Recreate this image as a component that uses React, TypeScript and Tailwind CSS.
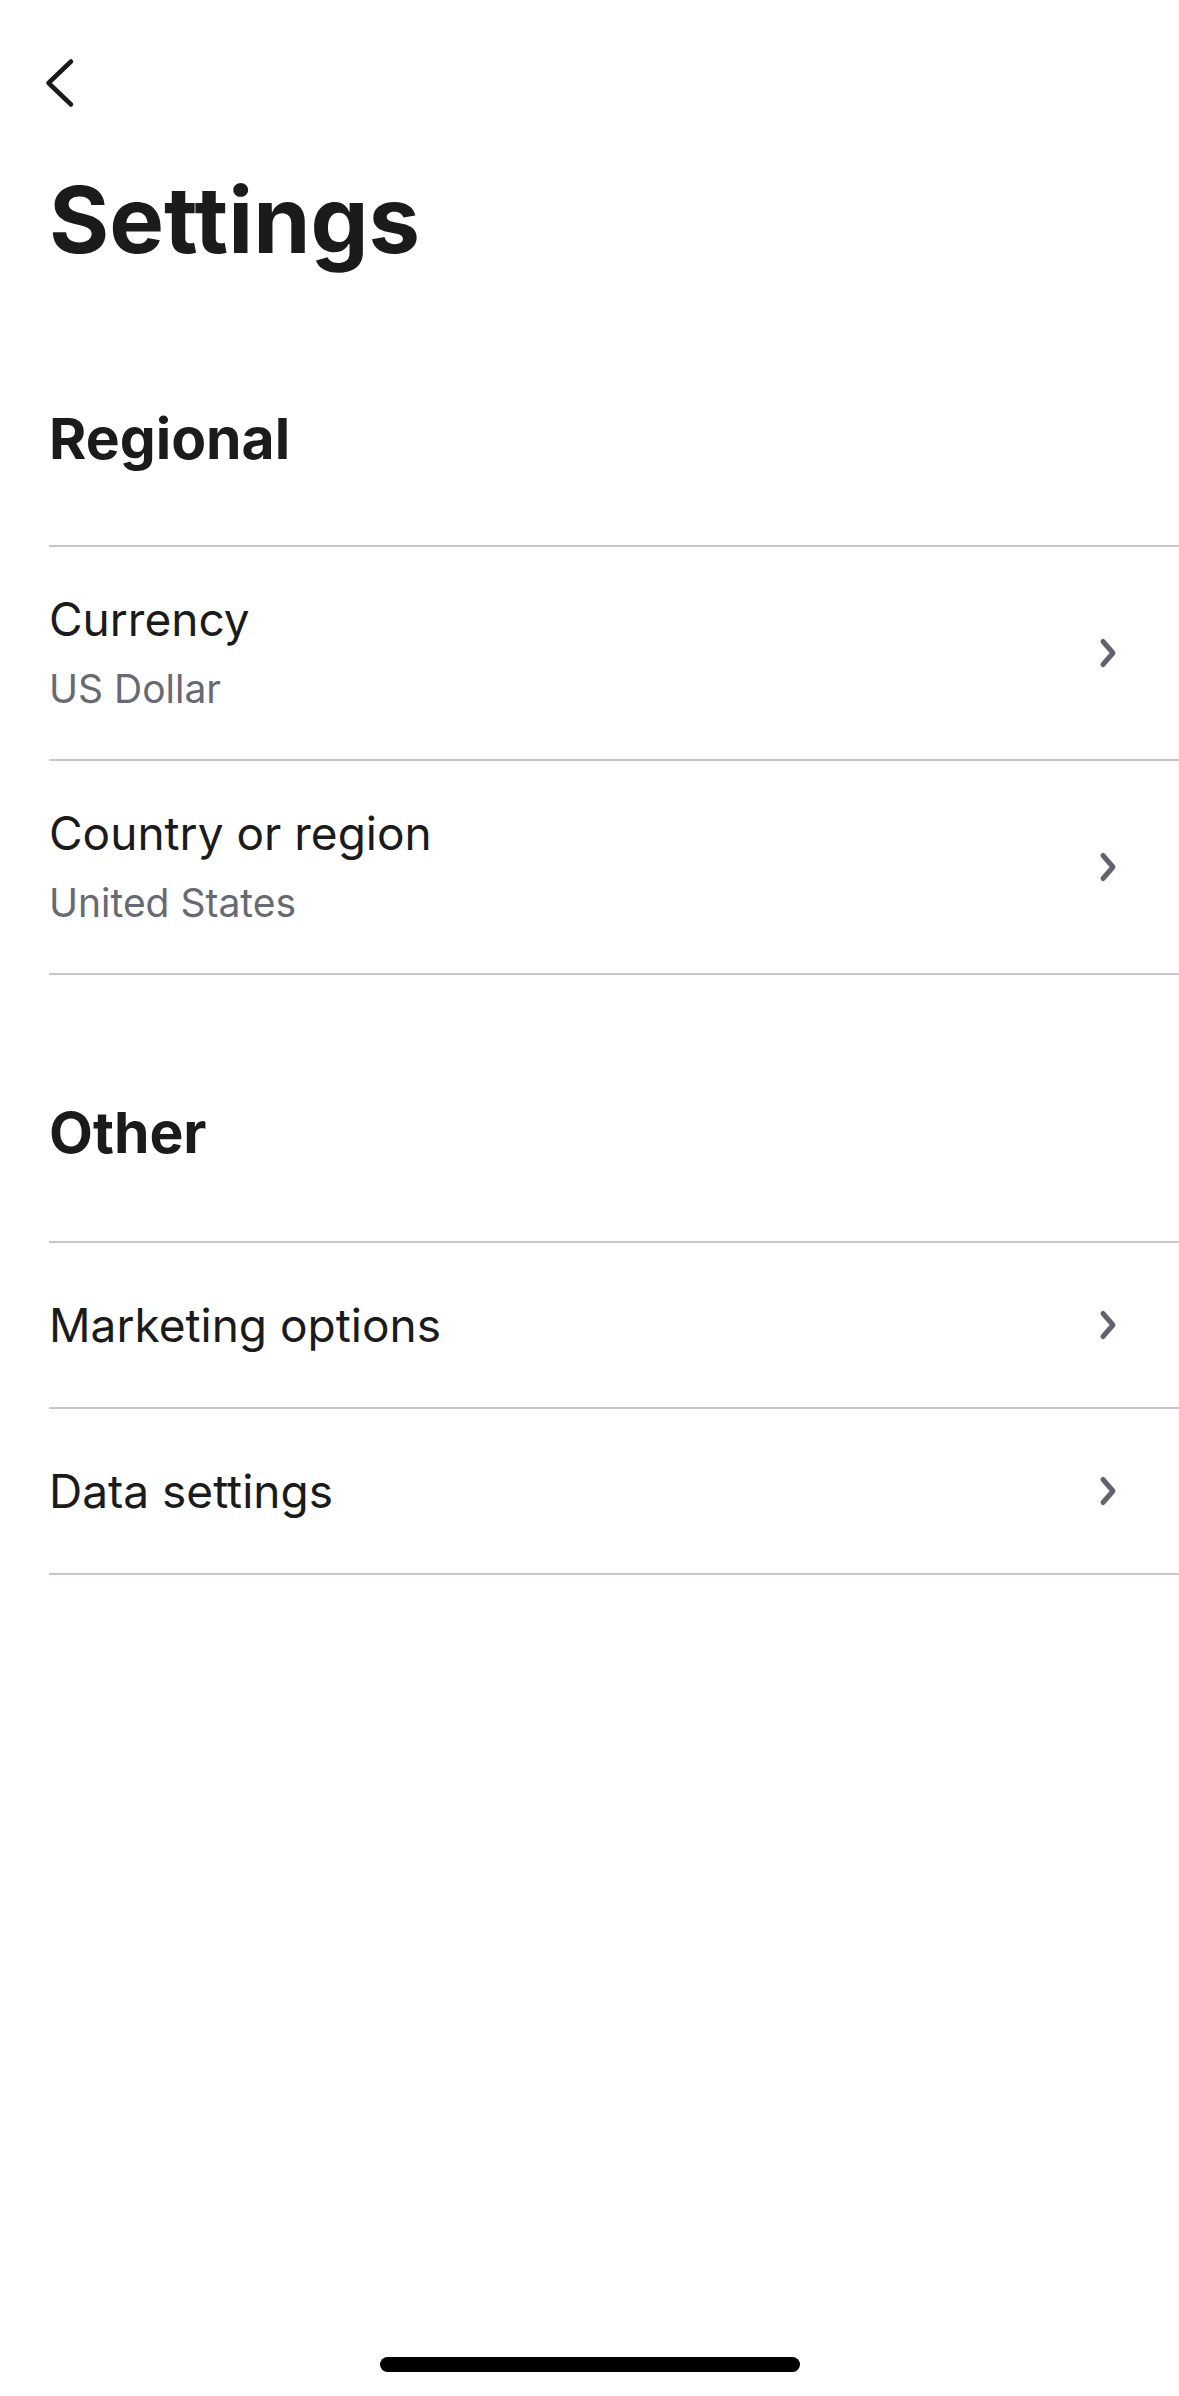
import React from "react";

interface SettingsRowProps {
  title: string;
  value?: string;
}

function ChevronRight() {
  return (
    <svg width="20" height="32" viewBox="0 0 20 32" fill="none" className="shrink-0">
      <path
        d="M5 4.5 L15 16 L5 27.5"
        stroke="#5f636d"
        strokeWidth="5"
        strokeLinecap="round"
        strokeLinejoin="round"
      />
    </svg>
  );
}

function SettingsRow({ title, value }: SettingsRowProps) {
  return (
    <div
      className={`flex items-center justify-between border-b-2 border-[#c5c8d2] pr-[61px] ${
        value ? "h-[214px]" : "h-[166px]"
      }`}
    >
      <div className="flex flex-col">
        <span className="text-[46px] leading-[56px] text-[#1b1b1b]">{title}</span>
        {value && (
          <span className="mt-[16px] text-[39px] leading-[52px] text-[#676a73]">{value}</span>
        )}
      </div>
      <ChevronRight />
    </div>
  );
}

function Section({ title, children, gap }: { title: string; children: React.ReactNode; gap: string }) {
  return (
    <section className="flex flex-col">
      <h2 className={`pl-[49px] text-[57px] font-bold leading-[68px] text-[#1b1b1b] ${gap}`}>{title}</h2>
      <div className="ml-[49px] border-t-2 border-[#c5c8d2]">{children}</div>
    </section>
  );
}

export default function App() {
  return (
    <div className="flex min-h-[2396px] w-full flex-col bg-white font-[Inter,sans-serif]">
      <button className="ml-[44px] mt-[56px] w-fit">
        <svg width="32" height="54" viewBox="0 0 32 54" fill="none">
          <path
            d="M27 5.5 L4.5 27 L27 48.5"
            stroke="#1b1b1b"
            strokeWidth="4.5"
            strokeLinecap="round"
            strokeLinejoin="round"
          />
        </svg>
      </button>

      <h1 className="mt-[59px] pl-[49px] text-[92px] font-bold leading-[101px] text-[#1b1b1b]">
        Settings
      </h1>

      <div className="mt-[135px]">
        <Section title="Regional" gap="mb-[72px]">
          <SettingsRow title="Currency" value="US Dollar" />
          <SettingsRow title="Country or region" value="United States" />
        </Section>
      </div>

      <div className="mt-[124px]">
        <Section title="Other" gap="mb-[74px]">
          <SettingsRow title="Marketing options" />
          <SettingsRow title="Data settings" />
        </Section>
      </div>

      <div className="mt-auto flex justify-center pb-[24px]">
        <div className="h-[15px] w-[420px] rounded-full bg-black" />
      </div>
    </div>
  );
}
